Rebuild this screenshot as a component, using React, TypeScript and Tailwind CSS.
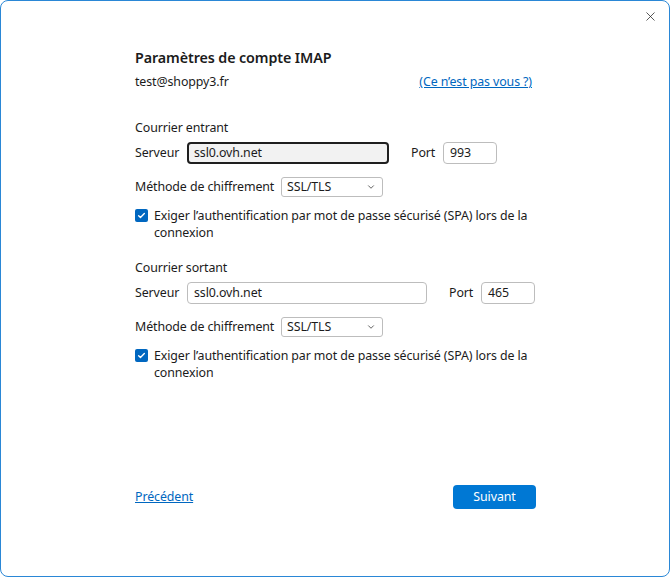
import { ChevronDown, X } from "lucide-react";

function Field({ value, width, focused }: { value: string; width: string; focused?: boolean }) {
  return (
    <div
      className={`flex h-[22px] shrink-0 items-center rounded-[4px] ${width} ${
        focused ? "border-2 border-[#1f1f1f] bg-[#f2f2f2] px-[5px]" : "border border-[#bdbdbd] bg-white px-[6px]"
      }`}
    >
      {value}
    </div>
  );
}

function Select({ value }: { value: string }) {
  return (
    <div className="flex h-[20px] w-[102px] shrink-0 items-center justify-between rounded-[3px] border border-[#bdbdbd] bg-white pl-[5px] pr-[6px]">
      <span>{value}</span>
      <ChevronDown className="h-[10px] w-[10px] text-[#444]" strokeWidth={2} />
    </div>
  );
}

function Check({ label }: { label: string }) {
  return (
    <div className="flex items-start gap-[6px] leading-[17px]">
      <span className="mt-[2px] flex h-[13px] w-[13px] shrink-0 items-center justify-center rounded-[2px] bg-[#0067c0]">
        <svg viewBox="0 0 12 12" className="h-[9px] w-[9px]" fill="none" stroke="white" strokeWidth={1.8}>
          <path d="M2.2 6.3l2.4 2.3 5.2-5.2" strokeLinecap="round" strokeLinejoin="round" />
        </svg>
      </span>
      <span className="w-[382px]">{label}</span>
    </div>
  );
}

function Section({
  title,
  server,
  port,
  serverWidth,
  focused,
}: {
  title: string;
  server: string;
  port: string;
  serverWidth: string;
  focused?: boolean;
}) {
  return (
    <div className="flex flex-col">
      <div className="leading-[18px]">{title}</div>
      <div className="mt-[5px] flex items-center whitespace-nowrap">
        <span className="w-[52px] shrink-0">Serveur</span>
        <Field value={server} width={serverWidth} focused={focused} />
        <span className="ml-[22px] w-[32px] shrink-0">Port</span>
        <Field value={port} width="w-[54px]" />
      </div>
      <div className="mt-[13px] flex items-center whitespace-nowrap">
        <span className="w-[146px] shrink-0">Méthode de chiffrement</span>
        <Select value="SSL/TLS" />
      </div>
      <div className="mt-[10px]">
        <Check label="Exiger l’authentification par mot de passe sécurisé (SPA) lors de la connexion" />
      </div>
    </div>
  );
}

export default function App() {
  return (
    <div className="flex h-[577px] w-[670px] flex-col rounded-[8px] border border-[#2a87d6] bg-white font-['Noto_Sans',sans-serif] text-[12.4px] tracking-[-0.1px] text-[#1b1b1b]">
      <div className="flex h-[30px] justify-end pr-[11px] pt-[8px]">
        <X className="h-[15px] w-[15px] text-[#222]" strokeWidth={1.2} />
      </div>
      <div className="ml-[134px] flex w-[397px] flex-col">
        <h1 className="mt-[17px] text-[14.3px] font-semibold leading-[20px]">Paramètres de compte IMAP</h1>
        <div className="mt-[5px] flex justify-between leading-[18px]">
          <span>test@shoppy3.fr</span>
          <a className="text-[#0067c0] underline">(Ce n’est pas vous ?)</a>
        </div>
        <div className="mt-[28px]">
          <Section title="Courrier entrant" server="ssl0.ovh.net" port="993" serverWidth="w-[202px]" focused />
        </div>
        <div className="mt-[18px]">
          <Section title="Courrier sortant" server="ssl0.ovh.net" port="465" serverWidth="w-[240px]" />
        </div>
      </div>
      <div className="mt-auto mb-[67px] ml-[134px] flex w-[401px] items-center justify-between">
        <a className="text-[#0067c0] underline">Précédent</a>
        <button className="h-[24px] w-[83px] rounded-[4px] bg-[#0078d4] text-white">Suivant</button>
      </div>
    </div>
  );
}
